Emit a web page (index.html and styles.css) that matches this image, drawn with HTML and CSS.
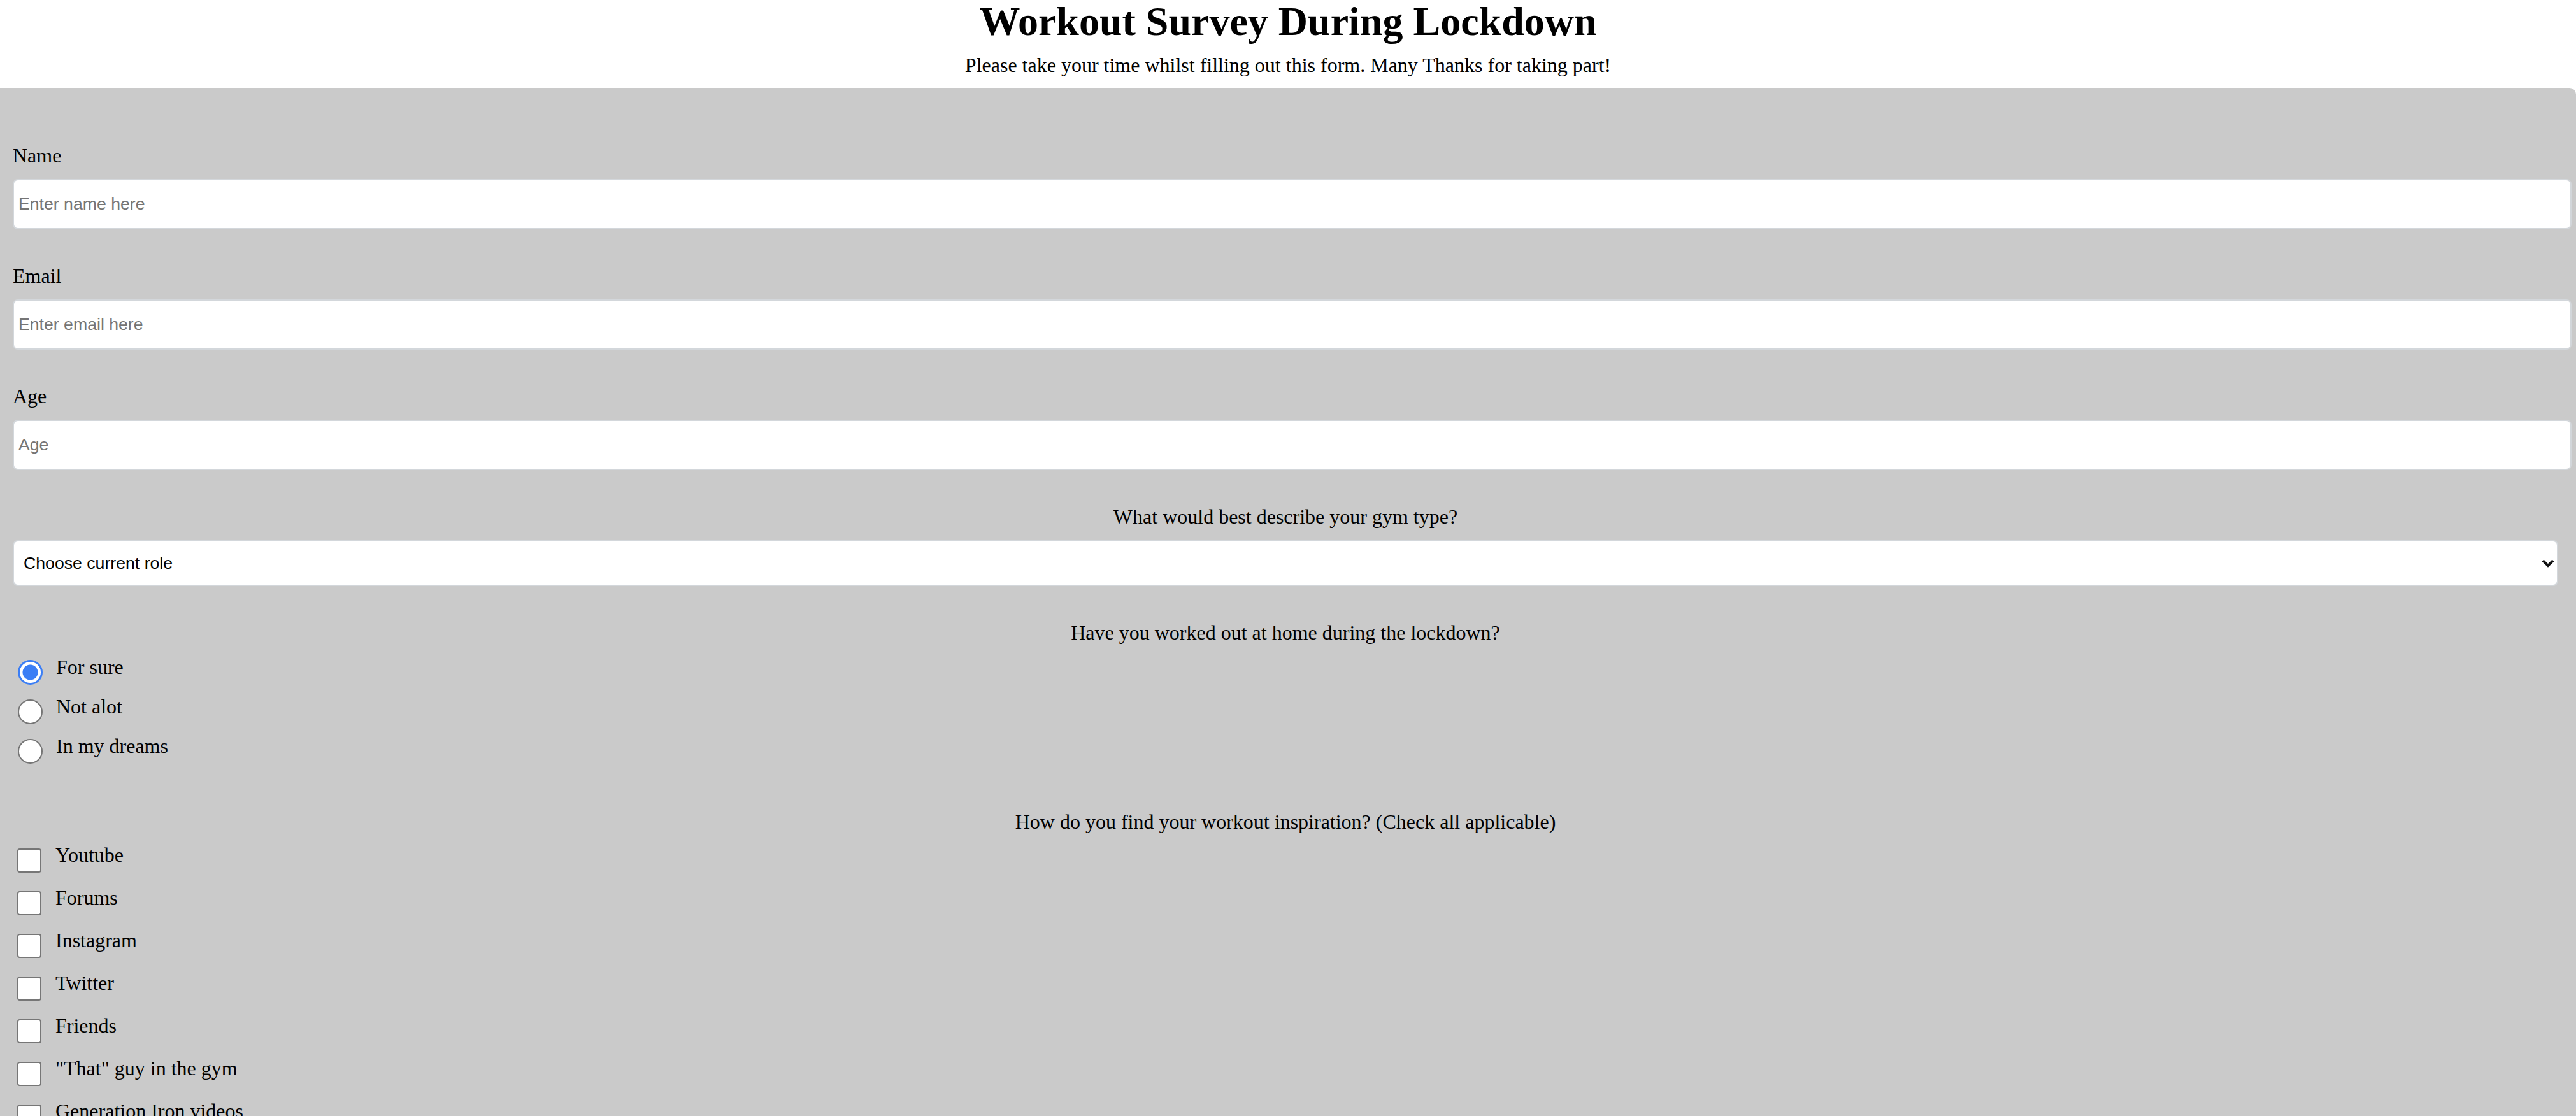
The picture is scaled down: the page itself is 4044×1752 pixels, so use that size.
FILE: index.html
```html
<!DOCTYPE html>
<html lang="en">
<head>
<meta charset="utf-8">
<title>Workout Survey During Lockdown</title>
<link rel="stylesheet" href="styles.css">
</head>
<body>
<header class="masthead">
  <h1 class="title" id="title">Workout Survey During Lockdown</h1>
  <p class="lead" id="description">Please take your time whilst filling out this form. Many Thanks for taking part!</p>
</header>
<form class="survey" id="survey-form">
  <div class="field">
    <label class="field-label" id="name-label" for="name">Name</label>
    <input class="text-input" id="name" type="text" placeholder="Enter name here">
  </div>
  <div class="field">
    <label class="field-label" id="email-label" for="email">Email</label>
    <input class="text-input" id="email" type="email" placeholder="Enter email here">
  </div>
  <div class="field">
    <label class="field-label" id="number-label" for="number">Age</label>
    <input class="text-input" id="number" type="number" placeholder="Age">
  </div>
  <div class="field">
    <label class="field-label centered" for="dropdown">What would best describe your gym type?</label>
    <div class="select-wrap">
      <select class="select" id="dropdown">
        <option>Choose current role</option>
        <option>Powerlifter</option>
        <option>Bodybuilder</option>
        <option>Casual</option>
      </select>
      <svg class="chevron" viewBox="0 0 20 13" width="20" height="13" aria-hidden="true"><path d="M2 2 L10 10 L18 2" fill="none" stroke="#111" stroke-width="4"/></svg>
    </div>
  </div>
  <div class="field">
    <p class="field-label centered">Have you worked out at home during the lockdown?</p>
    <div class="choices radios">
      <label class="choice"><input class="radio" type="radio" name="home" value="sure" checked><span>For sure</span></label>
      <label class="choice"><input class="radio" type="radio" name="home" value="notalot"><span>Not alot</span></label>
      <label class="choice"><input class="radio" type="radio" name="home" value="dreams"><span>In my dreams</span></label>
    </div>
  </div>
  <div class="field field-wide">
    <p class="field-label centered">How do you find your workout inspiration? (Check all applicable)</p>
    <div class="choices checks">
      <label class="choice"><input class="check" type="checkbox" value="youtube"><span>Youtube</span></label>
      <label class="choice"><input class="check" type="checkbox" value="forums"><span>Forums</span></label>
      <label class="choice"><input class="check" type="checkbox" value="instagram"><span>Instagram</span></label>
      <label class="choice"><input class="check" type="checkbox" value="twitter"><span>Twitter</span></label>
      <label class="choice"><input class="check" type="checkbox" value="friends"><span>Friends</span></label>
      <label class="choice"><input class="check" type="checkbox" value="guy"><span>"That" guy in the gym</span></label>
      <label class="choice"><input class="check" type="checkbox" value="geniron"><span>Generation Iron videos</span></label>
      <label class="choice"><input class="check" type="checkbox" value="other"><span>Other</span></label>
    </div>
  </div>
</form>
</body>
</html>
```

FILE: styles.css
```css
* {
  box-sizing: border-box;
}

html, body {
  margin: 0;
  padding: 0;
  background: #ffffff;
  color: #000000;
  font-family: "Liberation Serif", "Times New Roman", serif;
  font-size: 32px;
}

body {
  overflow: hidden;
}

.masthead {
  text-align: center;
  padding: 2px 0 20px;
}

.title {
  margin: 0;
  font-size: 64px;
  font-weight: bold;
  line-height: 64px;
}

.lead {
  margin: 20px 0 0;
  font-size: 32px;
  line-height: 32px;
}

.survey {
  background: #cacaca;
  border-radius: 0 10px 0 0;
  padding: 88px 28px 60px 20px;
  min-height: 2000px;
}

.field + .field {
  margin-top: 55px;
}

.field-wide {
  margin-top: 73px !important;
}

.field-label {
  display: block;
  margin: 0 0 19px;
  font-size: 32px;
  line-height: 36px;
}

.field-label.centered {
  text-align: center;
}

.choices .choice + .choice {
  margin-top: 16px;
}

.checks .choice + .choice {
  margin-top: 21px;
}

.radios {
  margin-top: -1px;
}

.checks {
  margin-top: -3px;
}

.text-input {
  display: block;
  width: calc(100% + 21px);
  height: 79px;
  margin: 0;
  padding: 0 8px 0 7px;
  border: 2px solid #d3d7db;
  border-radius: 8px;
  background: #ffffff;
  font-family: "Liberation Sans", Arial, sans-serif;
  font-size: 26.67px;
  color: #000;
  outline: none;
  -moz-appearance: textfield;
}

.text-input::-webkit-outer-spin-button,
.text-input::-webkit-inner-spin-button {
  -webkit-appearance: none;
  margin: 0;
}

.text-input::placeholder {
  color: #757575;
}

.select-wrap {
  position: relative;
}

.select {
  display: block;
  width: 100%;
  height: 72px;
  margin: 0;
  padding: 0 60px 0 15px;
  border: 2px solid #d3d7db;
  border-radius: 8px;
  background: #ffffff;
  font-family: "Liberation Sans", Arial, sans-serif;
  font-size: 26.67px;
  color: #000;
  -webkit-appearance: none;
  appearance: none;
  outline: none;
}

.chevron {
  position: absolute;
  right: 6px;
  top: 30px;
  pointer-events: none;
}

.choice {
  display: flex;
  align-items: flex-start;
  height: 46px;
  line-height: 36px;
  font-size: 32px;
}

.radio {
  -webkit-appearance: none;
  appearance: none;
  flex: none;
  width: 39px;
  height: 39px;
  margin: 7px 21px 0 8px;
  border: 2px solid #767676;
  border-radius: 50%;
  background: #ffffff;
}

.radio:checked {
  border: 3px solid #3b7ef5;
  background: radial-gradient(circle, #3b7ef5 0 11.5px, #ffffff 12.5px);
}

.check {
  -webkit-appearance: none;
  appearance: none;
  flex: none;
  width: 38px;
  height: 38px;
  margin: 8px 22px 0 7px;
  border: 2px solid #767676;
  border-radius: 4px;
  background: #ffffff;
}
```
